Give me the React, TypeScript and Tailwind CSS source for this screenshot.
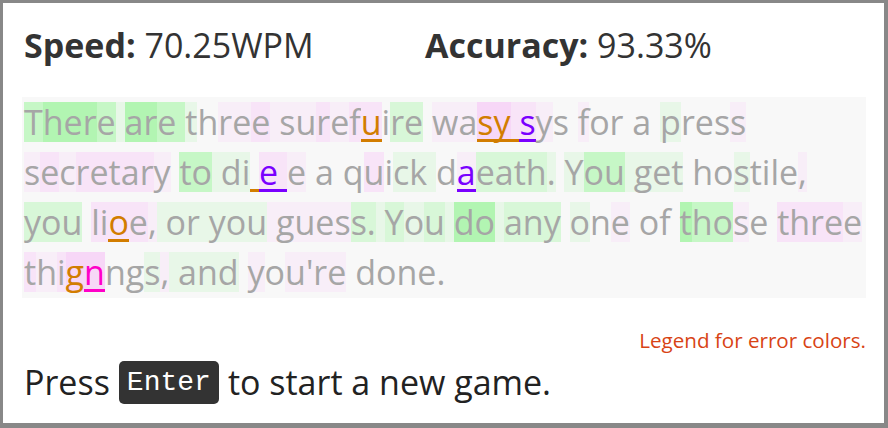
import React from "react";

const BG: Record<string, string> = {
  G: "bg-[#b2f5b2]",
  g: "bg-[#c6f7c6]",
  m: "bg-[#d8f7d8]",
  l: "bg-[#e8f7e8]",
  P: "bg-[#f7d7f7]",
  p: "bg-[#f8e4f8]",
  q: "bg-[#f8eef8]",
  ".": "",
};

type Err = { color: "o" | "v" | "m"; underline: boolean };

const TXT: Record<string, string> = {
  o: "text-[#d27d00]",
  v: "text-[#7a00ff]",
  m: "text-[#ff00c8]",
};
const UL: Record<string, string> = {
  o: "border-b-[3px] border-[#d27d00]",
  v: "border-b-[3px] border-[#7a00ff]",
  m: "border-b-[3px] border-[#ff00c8]",
};

type Line = { text: string; codes: string; errs: Record<number, Err> };

function idx(text: string, word: string, offset: number, from = 0) {
  return text.indexOf(word, from) + offset;
}

const l1 = "There are three surefuire wasy sys for a press";
const l2 = "secretary to di e e a quick daeath. You get hostile,";
const l3 = "you lioe, or you guess. You do any one of those three";
const l4 = "thignngs, and you're done.";

const lines: Line[] = [
  {
    text: l1,
    codes:
      "gGGGg" + "l" + "GGg" + "g" + "l.qqp" + "q" + "qqpqpp.mm" + "." + "qqPP" + "p" + "pq." + "." + "q.." + "." + "." + "." + "l...q",
    errs: {
      [idx(l1, "surefuire", 5)]: { color: "o", underline: true },
      [idx(l1, "wasy", 2)]: { color: "o", underline: true },
      [idx(l1, "wasy", 3)]: { color: "o", underline: true },
      [idx(l1, "wasy", 4)]: { color: "o", underline: true },
      [idx(l1, "sys", 0)]: { color: "v", underline: true },
    },
  },
  {
    text: l2,
    codes:
      "qpqpppppq" + "." + "gg" + "l" + "ll" + "." + "p" + "p" + "q" + "." + "." + "." + ".p.ll" + "l" + ".qmmmml" + "." + "lgg" + "l" + "lll" + "." + "..l....q",
    errs: {
      [idx(l2, "di", 2)]: { color: "o", underline: true },
      [idx(l2, "di", 3)]: { color: "v", underline: true },
      [idx(l2, "di", 4)]: { color: "v", underline: true },
      [idx(l2, "daeath", 1)]: { color: "v", underline: true },
    },
  },
  {
    text: l3,
    codes:
      "mmm" + "." + "pppp" + "q" + "l" + "ll" + "l" + "lll" + "q" + "qqqqm" + "m" + "l" + "mlm" + "l" + "GG" + "l" + "mmm" + "." + "l.q" + "." + ".." + "." + "Gggq." + "." + "ppppq",
    errs: {
      [idx(l3, "lioe", 2)]: { color: "o", underline: true },
    },
  },
  {
    text: l4,
    codes: "pqpPP..lq" + "l" + "lll" + "." + "q.qqqq" + "." + ".....",
    errs: {
      [idx(l4, "thignngs", 3)]: { color: "o", underline: false },
      [idx(l4, "thignngs", 4)]: { color: "m", underline: true },
    },
  },
];

function TypedLine({ line }: { line: Line }) {
  return (
    <div className="flex h-[40px]">
      {line.text.split("").map((ch, i) => {
        const code = line.codes[i] ?? ".";
        const err = line.errs[i];
        const cls = [
          "inline-block h-[40px] leading-[40px] whitespace-pre box-border",
          BG[code] ?? "",
          err ? TXT[err.color] : "",
          err && err.underline ? UL[err.color] : "",
        ].join(" ");
        return (
          <span key={i} className={cls}>
            {ch}
          </span>
        );
      })}
    </div>
  );
}

export default function App() {
  return (
    <div className="w-[888px] h-[428px] box-border border-t-[3px] border-l-[3px] border-r-4 border-b-[5px] border-[#888888] bg-white overflow-hidden font-['Open_Sans',sans-serif]">
      <div className="pl-[19px] pr-[18px] pt-[22px]">
        <div className="flex h-[40px] leading-[40px] text-[34px] text-[#333333] pl-[2px]">
          <div className="w-[401px]">
            <span className="font-bold">Speed:</span> 70.25WPM
          </div>
          <div>
            <span className="font-bold">Accuracy:</span> 93.33%
          </div>
        </div>
        <div className="mt-[32px] bg-[#f8f8f8] text-[34px] text-[#a6a6a6] pl-[2px] pt-[5px] pb-[6px] flex flex-col gap-[10px]">
          {lines.map((ln, i) => (
            <TypedLine key={i} line={ln} />
          ))}
        </div>
        <div className="mt-[30px] flex justify-end h-[24px] leading-[24px] text-[20.6px] text-[#d84315]">
          Legend for error colors.
        </div>
        <div className="mt-[9px] flex items-center h-[43px] text-[34px] text-[#222222] pl-[2px]">
          <span>Press</span>
          <span className="mx-[9px] inline-flex items-center h-[43px] px-[8px] rounded-[5px] bg-[#333333] text-white font-['Liberation_Mono',monospace] text-[28px]">
            Enter
          </span>
          <span>to start a new game.</span>
        </div>
      </div>
    </div>
  );
}
